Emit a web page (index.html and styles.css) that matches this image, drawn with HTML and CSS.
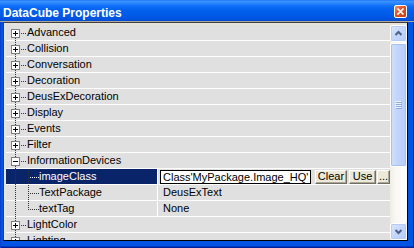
FILE: index.html
```html
<!DOCTYPE html>
<html>
<head>
<meta charset="utf-8">
<title>DataCube Properties</title>
<link rel="stylesheet" href="styles.css">
</head>
<body>
<svg class="defs" width="0" height="0">
  <defs>
    <symbol id="t-first" viewBox="0 0 40 16">
      <path d="M9.5 13V16" stroke="#333" stroke-dasharray="1 1" fill="none"/>
      <path d="M15 8.5H21" stroke="#333" stroke-dasharray="1 1" fill="none"/>
      <rect x="5.5" y="4.5" width="8" height="8" fill="#fff" stroke="#808080"/>
      <path d="M7 8.5H12M9.5 6V11" stroke="#000" fill="none"/>
    </symbol>
    <symbol id="t-cat" viewBox="0 0 40 16">
      <path d="M9.5 1V4M9.5 13V16" stroke="#333" stroke-dasharray="1 1" fill="none"/>
      <path d="M15 8.5H21" stroke="#333" stroke-dasharray="1 1" fill="none"/>
      <rect x="5.5" y="4.5" width="8" height="8" fill="#fff" stroke="#808080"/>
      <path d="M7 8.5H12M9.5 6V11" stroke="#000" fill="none"/>
    </symbol>
    <symbol id="t-open" viewBox="0 0 40 16">
      <path d="M9.5 1V4M9.5 13V16" stroke="#333" stroke-dasharray="1 1" fill="none"/>
      <path d="M15 8.5H21" stroke="#333" stroke-dasharray="1 1" fill="none"/>
      <rect x="5.5" y="4.5" width="8" height="8" fill="#fff" stroke="#808080"/>
      <path d="M7 8.5H12" stroke="#000" fill="none"/>
    </symbol>
    <symbol id="t-child" viewBox="0 0 40 16">
      <path d="M9.5 1V16M22.5 0V16" stroke="#333" stroke-dasharray="1 1" fill="none"/>
      <path d="M24 8.5H33" stroke="#333" stroke-dasharray="1 1" fill="none"/>
    </symbol>
    <symbol id="t-child-sel" viewBox="0 0 40 16">
      <path d="M9.5 1V16M22.5 0V16" stroke="#333" stroke-dasharray="1 1" fill="none"/>
      <path d="M24 8.5H33" stroke="#fff" stroke-dasharray="1 1" fill="none"/>
    </symbol>
    <symbol id="t-child-last" viewBox="0 0 40 16">
      <path d="M9.5 1V16M22.5 0V9" stroke="#333" stroke-dasharray="1 1" fill="none"/>
      <path d="M24 8.5H33" stroke="#333" stroke-dasharray="1 1" fill="none"/>
    </symbol>
  </defs>
</svg>
<div class="window">
  <div class="titlebar">
    <span class="title">DataCube Properties</span>
    <span class="close">
      <svg width="13" height="13" viewBox="0 0 13 13">
        <defs>
          <linearGradient id="cg" x1="0" y1="0" x2="1" y2="1">
            <stop offset="0" stop-color="#f3a285"/>
            <stop offset="0.35" stop-color="#e35b30"/>
            <stop offset="1" stop-color="#c43b15"/>
          </linearGradient>
        </defs>
        <rect x="0.5" y="0.5" width="12" height="12" rx="1.5" fill="url(#cg)" stroke="#fff"/>
        <path d="M3.5 3.5L9.5 9.5M9.5 3.5L3.5 9.5" stroke="#fff" stroke-width="1.7"/>
      </svg>
    </span>
  </div>
  <div class="frame">
    <div class="client">
      <div class="rows">
        <div class="row"><svg class="tree cat" width="21" height="16" viewBox="0 0 21 16"><use href="#t-first" width="40" height="16"/></svg><span class="label">Advanced</span></div>
        <div class="row"><svg class="tree cat" width="21" height="16" viewBox="0 0 21 16"><use href="#t-cat" width="40" height="16"/></svg><span class="label">Collision</span></div>
        <div class="row"><svg class="tree cat" width="21" height="16" viewBox="0 0 21 16"><use href="#t-cat" width="40" height="16"/></svg><span class="label">Conversation</span></div>
        <div class="row"><svg class="tree cat" width="21" height="16" viewBox="0 0 21 16"><use href="#t-cat" width="40" height="16"/></svg><span class="label">Decoration</span></div>
        <div class="row"><svg class="tree cat" width="21" height="16" viewBox="0 0 21 16"><use href="#t-cat" width="40" height="16"/></svg><span class="label">DeusExDecoration</span></div>
        <div class="row"><svg class="tree cat" width="21" height="16" viewBox="0 0 21 16"><use href="#t-cat" width="40" height="16"/></svg><span class="label">Display</span></div>
        <div class="row"><svg class="tree cat" width="21" height="16" viewBox="0 0 21 16"><use href="#t-cat" width="40" height="16"/></svg><span class="label">Events</span></div>
        <div class="row"><svg class="tree cat" width="21" height="16" viewBox="0 0 21 16"><use href="#t-cat" width="40" height="16"/></svg><span class="label">Filter</span></div>
        <div class="row"><svg class="tree cat" width="21" height="16" viewBox="0 0 21 16"><use href="#t-open" width="40" height="16"/></svg><span class="label">InformationDevices</span></div>
        <div class="row prop sel">
          <div class="namecell"><svg class="tree" width="33" height="16" viewBox="0 0 33 16"><use href="#t-child-sel" width="40" height="16"/></svg><span class="label">imageClass</span></div>
          <div class="valcell editcell">
            <div class="edit">Class'MyPackage.Image_HQ'</div>
            <div class="btn clear">Clear</div>
            <div class="btn use">Use</div>
            <div class="btn more">...</div>
          </div>
        </div>
        <div class="row prop">
          <div class="namecell"><svg class="tree" width="33" height="16" viewBox="0 0 33 16"><use href="#t-child" width="40" height="16"/></svg><span class="label">TextPackage</span></div>
          <div class="valcell"><span class="label">DeusExText</span></div>
        </div>
        <div class="row prop">
          <div class="namecell"><svg class="tree" width="33" height="16" viewBox="0 0 33 16"><use href="#t-child-last" width="40" height="16"/></svg><span class="label">textTag</span></div>
          <div class="valcell"><span class="label">None</span></div>
        </div>
        <div class="row"><svg class="tree cat" width="21" height="16" viewBox="0 0 21 16"><use href="#t-cat" width="40" height="16"/></svg><span class="label">LightColor</span></div>
        <div class="row"><svg class="tree cat" width="21" height="16" viewBox="0 0 21 16"><use href="#t-cat" width="40" height="16"/></svg><span class="label">Lighting</span></div>
      </div>
      <div class="scrollbar">
        <div class="sb-btn">
          <svg width="15" height="15" viewBox="0 0 15 15"><path d="M4.5 9L7.5 6L10.5 9" stroke="#4d6185" stroke-width="2" fill="none"/></svg>
        </div>
        <div class="track">
          <div class="thumb">
            <svg width="7" height="8" viewBox="0 0 7 8">
              <path d="M0 0.5H6M0 2.5H6M0 4.5H6M0 6.5H6" stroke="#eef3ff"/>
              <path d="M1 1.5H7M1 3.5H7M1 5.5H7M1 7.5H7" stroke="#8caae6"/>
            </svg>
          </div>
        </div>
        <div class="sb-btn">
          <svg width="15" height="15" viewBox="0 0 15 15"><path d="M4.5 6L7.5 9L10.5 6" stroke="#4d6185" stroke-width="2" fill="none"/></svg>
        </div>
      </div>
    </div>
  </div>
</div>
</body>
</html>
```

FILE: styles.css
```css
* {
  box-sizing: border-box;
  margin: 0;
  padding: 0;
}

html, body {
  width: 414px;
  height: 248px;
  overflow: hidden;
}

body {
  font-family: "Liberation Sans", Arial, sans-serif;
  font-size: 11px;
  color: #000;
  background: #0054e3;
}

.defs {
  position: absolute;
  width: 0;
  height: 0;
}

.window {
  width: 414px;
  height: 248px;
  display: flex;
  flex-direction: column;
}

.titlebar {
  height: 22px;
  flex: none;
  display: flex;
  align-items: flex-start;
  justify-content: space-between;
  border-bottom: 1px solid #aca899;
  background: linear-gradient(to bottom,
    #1a6cf2 0px, #3d93ff 1px, #2d89ff 3px, #0f6ef8 6px,
    #0360ec 10px, #005be8 15px, #0053de 19px, #004ad2 21px);
}

.title {
  color: #fff;
  font-weight: bold;
  font-size: 12px;
  line-height: 14px;
  padding: 6px 0 0 3px;
  white-space: nowrap;
}

.close {
  display: block;
  width: 13px;
  height: 13px;
  margin: 5px 7px 0 0;
}

.close svg {
  display: block;
}

.frame {
  flex: 1;
  display: flex;
  min-height: 0;
  padding: 0 6px 7px 3px;
  background: #0054e3;
  box-shadow: inset 1px 0 0 #0a3fd0, inset -1px 0 0 #0029b0, inset 0 -1px 0 #00209c, inset 0 -2px 0 #0038c4;
}

.client {
  flex: 1;
  display: flex;
  min-height: 0;
  border: 1px solid #000;
  border-color: #404040 #000 #000 #404040;
  padding: 2px 0 0 2px;
  background: #e6e4dc;
}

.rows {
  flex: 1;
  min-width: 0;
  overflow: hidden;
  display: flex;
  flex-direction: column;
}

.row {
  flex: none;
  height: 16px;
  display: flex;
  background: linear-gradient(#e0e0e0 15px, #fff 15px);
}

.tree {
  flex: none;
  display: block;
}

.label {
  line-height: 15px;
  white-space: nowrap;
}

.namecell {
  width: 151px;
  flex: none;
  display: flex;
}

.valcell {
  flex: 1;
  display: flex;
  border-left: 1px solid #fff;
  padding-left: 5px;
}

.row.sel .namecell {
  background: linear-gradient(#0a246a 15px, #fff 15px);
  color: #fff;
}

.valcell.editcell {
  padding: 1px 0 0 2px;
  align-items: flex-start;
}

.edit {
  flex: none;
  width: 151px;
  height: 14px;
  border: 1px solid #000;
  background: #fff;
  padding-left: 2px;
  line-height: 12px;
  white-space: nowrap;
  overflow: hidden;
}

.btn {
  flex: none;
  height: 14px;
  background: #ece9d8;
  border: 1px solid;
  border-color: #fff #716f64 #716f64 #fff;
  box-shadow: inset -1px -1px 0 #aca899;
  line-height: 11px;
  text-align: center;
  white-space: nowrap;
}

.clear {
  width: 32px;
  margin-left: 4px;
}

.use {
  width: 27px;
  margin-left: 2px;
}

.more {
  width: 13px;
  margin-left: 1px;
}

.scrollbar {
  width: 17px;
  flex: none;
  display: flex;
  flex-direction: column;
}

.sb-btn {
  flex: none;
  height: 17px;
  display: flex;
  align-items: center;
  justify-content: center;
  border: 1px solid #fff;
  border-radius: 2px;
  background: linear-gradient(135deg, #dbe6fe, #c4d6fc 50%, #b4cbf9);
  box-shadow: inset 0 0 0 1px #b6cbf5;
}

.sb-btn svg {
  display: block;
}

.track {
  flex: 1;
  padding-top: 1px;
  background: linear-gradient(to right, #eeede5, #f8f7f2 5px, #fdfdfb);
}

.thumb {
  height: 124px;
  display: flex;
  align-items: center;
  justify-content: center;
  border: 1px solid #fff;
  border-radius: 2px;
  background: linear-gradient(to right, #d2e0fd, #c3d5fc 40%, #b6ccf9);
  box-shadow: inset 0 0 0 1px #a9c0f2;
}

.thumb svg {
  display: block;
}
```
